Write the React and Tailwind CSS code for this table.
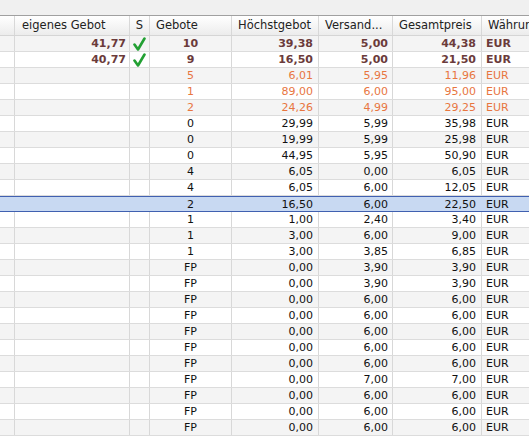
const rows = [
  { own: "41,77", s: true, bids: "10", max: "39,38", ship: "5,00", total: "44,38", kind: "bold" },
  { own: "40,77", s: true, bids: "9", max: "16,50", ship: "5,00", total: "21,50", kind: "bold" },
  { bids: "5", max: "6,01", ship: "5,95", total: "11,96", kind: "orange" },
  { bids: "1", max: "89,00", ship: "6,00", total: "95,00", kind: "orange" },
  { bids: "2", max: "24,26", ship: "4,99", total: "29,25", kind: "orange" },
  { bids: "0", max: "29,99", ship: "5,99", total: "35,98" },
  { bids: "0", max: "19,99", ship: "5,99", total: "25,98" },
  { bids: "0", max: "44,95", ship: "5,95", total: "50,90" },
  { bids: "4", max: "6,05", ship: "0,00", total: "6,05" },
  { bids: "4", max: "6,05", ship: "6,00", total: "12,05" },
  { bids: "2", max: "16,50", ship: "6,00", total: "22,50", selected: true },
  { bids: "1", max: "1,00", ship: "2,40", total: "3,40" },
  { bids: "1", max: "3,00", ship: "6,00", total: "9,00" },
  { bids: "1", max: "3,00", ship: "3,85", total: "6,85" },
  { bids: "FP", max: "0,00", ship: "3,90", total: "3,90" },
  { bids: "FP", max: "0,00", ship: "3,90", total: "3,90" },
  { bids: "FP", max: "0,00", ship: "6,00", total: "6,00" },
  { bids: "FP", max: "0,00", ship: "6,00", total: "6,00" },
  { bids: "FP", max: "0,00", ship: "6,00", total: "6,00" },
  { bids: "FP", max: "0,00", ship: "6,00", total: "6,00" },
  { bids: "FP", max: "0,00", ship: "6,00", total: "6,00" },
  { bids: "FP", max: "0,00", ship: "7,00", total: "7,00" },
  { bids: "FP", max: "0,00", ship: "6,00", total: "6,00" },
  { bids: "FP", max: "0,00", ship: "6,00", total: "6,00" },
  { bids: "FP", max: "0,00", ship: "6,00", total: "6,00" },
];

function Check() {
  return (
    <svg width="13" height="14" viewBox="0 0 13 14">
      <path d="M1.5 7.5 L5 12.5 L11.5 1.5" fill="none" stroke="#22a033" strokeWidth="2.6" strokeLinejoin="round" strokeLinecap="round" />
    </svg>
  );
}

export default function App() {
  return (
    <div className="w-[529px] h-[436px] overflow-hidden bg-white text-[11px] leading-none" style={{ fontFamily: '"DejaVu Sans", Verdana, sans-serif' }}>
      {/* top band */}
      <div className="h-[15px] bg-[#f0f0f0] border-b border-[#a0a0a0] box-content" />

      {/* header */}
      <div className="flex h-[20px] bg-gradient-to-b from-white to-[#ececec] border-b border-[#d5d5d5] text-[#222] text-[11.5px]">
        <div className="w-[15px] border-r border-[#d8d8d8]" />
        <div className="w-[115px] border-r border-[#d8d8d8] pl-[7px] flex items-center">eigenes Gebot</div>
        <div className="w-[20px] border-r border-[#d8d8d8] flex items-center justify-center">S</div>
        <div className="w-[82px] border-r border-[#d8d8d8] pl-[6px] flex items-center">Gebote</div>
        <div className="w-[87px] border-r border-[#d8d8d8] pl-[6px] flex items-center">Höchstgebot</div>
        <div className="w-[74px] border-r border-[#d8d8d8] pl-[6px] flex items-center">Versand...</div>
        <div className="w-[89px] border-r border-[#d8d8d8] pl-[6px] flex items-center">Gesamtpreis</div>
        <div className="w-[47px] pl-[6px] flex items-center overflow-hidden whitespace-nowrap">Währung</div>
      </div>

      {rows.map((r, i) => {
        const color =
          r.kind === "bold" ? "text-[#6b3b3b] font-bold" : r.kind === "orange" ? "text-[#e8763f]" : "text-[#111]";
        const bg = r.selected
          ? "bg-[#c8d9f2] border-y border-[#4060b0]"
          : i % 2 === 0
          ? "bg-[#f4f4f4] border-b border-[#dcdcdc]"
          : "bg-white border-b border-[#dcdcdc]";
        const line = r.selected ? "border-r border-[#c8d9f2]" : "border-r border-[#d8d8d8]";
        return (
          <div key={i} className={`flex h-[16px] ${bg} ${color}`}>
            <div className={`w-[15px] ${line}`} />
            <div className={`w-[115px] ${line} pr-[3px] flex items-center justify-end`}>{r.own}</div>
            <div className={`w-[20px] ${line} flex items-center justify-center`}>{r.s && <Check />}</div>
            <div className={`w-[82px] ${line} flex items-center justify-center`}>{r.bids}</div>
            <div className={`w-[87px] ${line} pr-[5px] flex items-center justify-end`}>{r.max}</div>
            <div className={`w-[74px] ${line} pr-[4px] flex items-center justify-end`}>{r.ship}</div>
            <div className={`w-[89px] ${line} pr-[5px] flex items-center justify-end`}>{r.total}</div>
            <div className="w-[47px] pl-[4px] flex items-center">EUR</div>
          </div>
        );
      })}
    </div>
  );
}
